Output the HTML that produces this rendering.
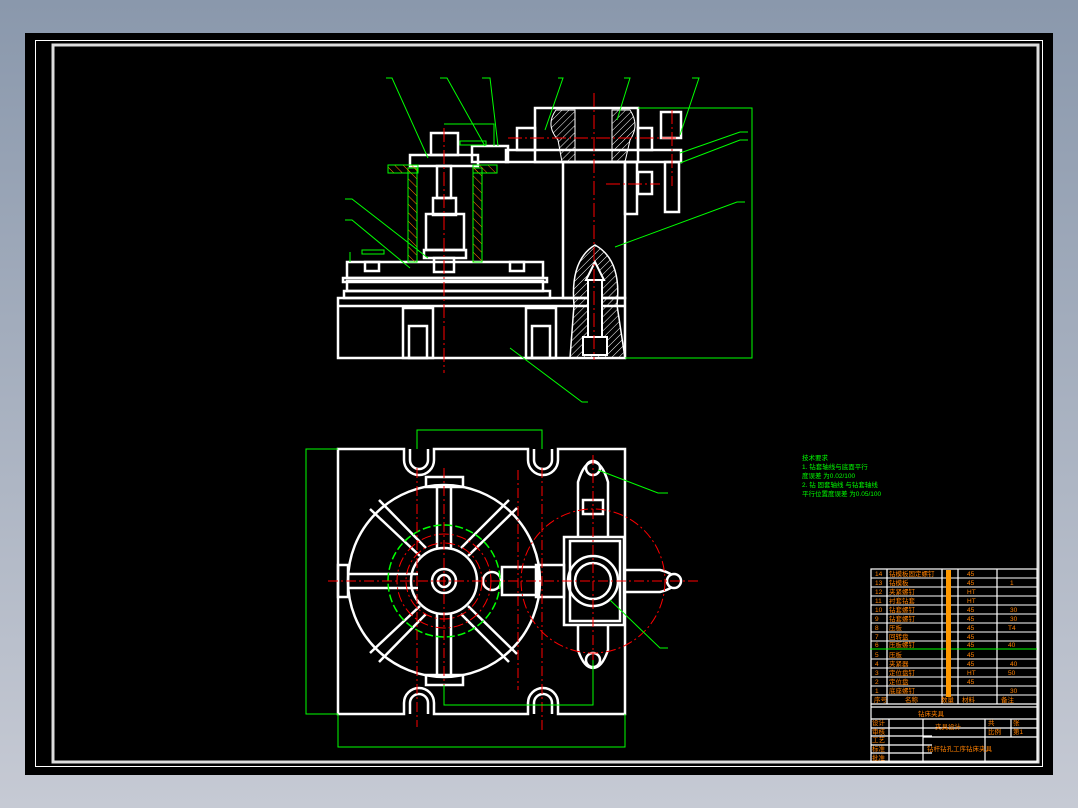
<!DOCTYPE html>
<html><head><meta charset="utf-8"><style>
html,body{margin:0;padding:0;width:1078px;height:808px;overflow:hidden;background:linear-gradient(#8a98ac,#c6cad4);}
svg{position:absolute;left:0;top:0}
text{font-family:"Liberation Sans","Noto Sans CJK SC",sans-serif}
</style></head><body>
<svg width="1078" height="808" viewBox="0 0 1078 808" xmlns="http://www.w3.org/2000/svg">
<defs>
<pattern id="hw" patternUnits="userSpaceOnUse" width="5" height="5" patternTransform="rotate(45)"><line x1="0" y1="0" x2="0" y2="5" stroke="#fff" stroke-width="1"/></pattern>
<pattern id="ho" patternUnits="userSpaceOnUse" width="6" height="6" patternTransform="rotate(-45)"><line x1="0" y1="0" x2="0" y2="6" stroke="#ff8000" stroke-width="1"/></pattern>
</defs>
<rect x="25" y="33" width="1028" height="742" fill="#000"/>
<rect x="35.5" y="40.5" width="1007" height="726" fill="none" stroke="#fff" stroke-width="1"/>
<rect x="53" y="45" width="985" height="717" fill="none" stroke="#ddd" stroke-width="3"/>

<!-- ===== TOP (front) VIEW ===== -->
<g fill="none" stroke="#fff" stroke-width="2.5">
<rect x="338" y="298" width="287" height="60"/>
<rect x="403" y="308" width="30" height="50"/><rect x="409" y="326" width="18" height="32"/>
<rect x="526" y="308" width="30" height="50"/><rect x="532" y="326" width="18" height="32"/>
<line x1="338" y1="306" x2="625" y2="306"/>
<rect x="344" y="291" width="206" height="7"/>
<rect x="347" y="281" width="196" height="10"/>
<rect x="343" y="278" width="204" height="4"/>
<rect x="347" y="262" width="196" height="16"/>
<rect x="365" y="262" width="14" height="9"/><rect x="510" y="262" width="14" height="9"/>
<rect x="434" y="258" width="20" height="14"/>
<rect x="431" y="133" width="27" height="22"/>
<rect x="410" y="155" width="68" height="11"/>
<rect x="437" y="166" width="14" height="32"/>
<rect x="433" y="198" width="23" height="17"/>
<rect x="426" y="214" width="38" height="36"/>
<rect x="424" y="250" width="42" height="8"/>
<rect x="563" y="162" width="62" height="136"/>
<rect x="625" y="162" width="12" height="52"/>
<rect x="535" y="108" width="103" height="54"/>
<rect x="506" y="150" width="175" height="12"/>
<rect x="517" y="128" width="18" height="22"/>
<rect x="638" y="128" width="14" height="22"/>
<rect x="661" y="112" width="20" height="26"/>
<rect x="665" y="162" width="14" height="50"/>
<rect x="638" y="172" width="14" height="22"/>
<rect x="472" y="146" width="36" height="16"/>
</g>
<rect x="408" y="168" width="9" height="94" fill="url(#ho)" stroke="#0f0" stroke-width="1"/>
<rect x="473" y="168" width="9" height="94" fill="url(#ho)" stroke="#0f0" stroke-width="1"/>
<rect x="388" y="165" width="30" height="8" fill="url(#ho)" stroke="#0f0" stroke-width="1"/>
<rect x="473" y="165" width="24" height="8" fill="url(#ho)" stroke="#0f0" stroke-width="1"/>
<path d="M574 305 Q570 260 595 245 Q622 260 617 305 L625 358 L570 358 Z" fill="url(#hw)" stroke="#fff" stroke-width="1.5"/>
<rect x="588" y="280" width="14" height="60" fill="#000" stroke="#fff" stroke-width="2"/>
<path d="M586 280 L595 262 L604 280 Z" fill="#000" stroke="#fff" stroke-width="2"/>
<rect x="583" y="337" width="24" height="18" fill="#000" stroke="#fff" stroke-width="2"/>
<path d="M556 110 Q545 125 558 140 L562 162 L575 162 L575 110 Z" fill="url(#hw)" stroke="#fff" stroke-width="1"/>
<path d="M630 110 Q640 125 630 140 L625 162 L612 162 L612 110 Z" fill="url(#hw)" stroke="#fff" stroke-width="1"/>
<g stroke="#f00" stroke-width="1" stroke-dasharray="14,3,2,3">
<line x1="444" y1="128" x2="444" y2="373"/>
<line x1="594" y1="93" x2="594" y2="360"/>
<line x1="508" y1="138" x2="676" y2="138"/>
<line x1="606" y1="184" x2="660" y2="184"/>
<line x1="672" y1="110" x2="672" y2="186"/>
</g>
<g stroke="#0f0" stroke-width="1" fill="none">
<path d="M386 78 L392 78 L428 158"/><path d="M440 78 L447 78 L485 146"/>
<path d="M482 78 L490 78 L498 146"/><path d="M558 78 L563 78 L545 130"/>
<path d="M624 78 L630 78 L617 120"/><path d="M692 78 L699 78 L680 135"/>
<path d="M748 132 L740 132 L680 153"/><path d="M748 140 L740 140 L680 163"/>
<path d="M745 202 L737 202 L615 247"/><path d="M345 199 L352 199 L428 258"/>
<path d="M345 220 L352 220 L410 268"/><path d="M588 402 L582 402 L510 348"/>
<path d="M350 252 L350 262"/><rect x="362" y="250" width="22" height="4"/>
<rect x="460" y="141" width="26" height="4"/>
<path d="M444 124 L494 124 L494 146"/>
<path d="M638 108 L752 108 L752 358 L625 358"/>
</g>

<!-- ===== BOTTOM (plan) VIEW ===== -->
<g fill="none" stroke="#fff" stroke-width="2.5">
<path d="M338 449 L404 449 L404 460 A15 15 0 0 0 434 460 L434 449 L528 449 L528 460 A15 15 0 0 0 558 460 L558 449 L625 449 L625 714 L558 714 L558 703 A15 15 0 0 0 528 703 L528 714 L434 714 L434 703 A15 15 0 0 0 404 703 L404 714 L338 714 Z"/>
<path d="M410 449 L410 460 A9 9 0 0 0 428 460 L428 449 M534 449 L534 460 A9 9 0 0 0 552 460 L552 449 M410 714 L410 703 A9 9 0 0 1 428 703 L428 714 M534 714 L534 703 A9 9 0 0 1 552 703 L552 714"/>
<circle cx="444" cy="581" r="96"/>
<circle cx="444" cy="581" r="33"/>
<circle cx="444" cy="581" r="12"/><circle cx="444" cy="581" r="6"/>
<rect x="426" y="477" width="37" height="10"/><rect x="426" y="675" width="37" height="10"/>
<rect x="338" y="565" width="10" height="32"/>
<path d="M437 487 L437 548 M451 487 L451 548 M437 614 L437 677 M451 614 L451 677"/>
<path d="M348 574 L418 574 M348 588 L418 588"/>
<path d="M370 509 L420 556 M379 500 L426 548 M468 556 L517 508 M461 548 L509 500 M370 653 L420 606 M379 662 L426 614 M468 606 L517 654 M461 614 L509 662"/>
<rect x="502" y="567" width="36" height="28"/>
<rect x="536" y="565" width="28" height="32"/>
<rect x="564" y="537" width="60" height="88"/>
<rect x="570" y="541" width="50" height="80"/>
<circle cx="593" cy="581" r="25"/><circle cx="593" cy="581" r="18"/>
<path d="M578 537 L578 482 Q584 462 593 462 Q602 462 608 482 L608 537"/>
<path d="M578 625 L578 650 Q584 668 593 668 Q602 668 608 650 L608 625"/>
<rect x="583" y="500" width="20" height="14"/>
<path d="M624 570 L660 570 Q668 572 672 575 M624 592 L660 592 Q668 590 672 587"/>
<circle cx="674" cy="581" r="7"/>
<circle cx="593" cy="468" r="7"/><circle cx="593" cy="660" r="7"/>
<circle cx="492" cy="581" r="9"/>
</g>
<g fill="none" stroke="#0f0" stroke-width="1.5" stroke-dasharray="8,3">
<circle cx="444" cy="581" r="56"/>
</g>
<g fill="none" stroke="#f00" stroke-width="1" stroke-dasharray="10,3,2,3">
<circle cx="444" cy="581" r="47"/><circle cx="444" cy="581" r="38"/>
<circle cx="593" cy="581" r="72"/>
<line x1="328" y1="581" x2="700" y2="581"/>
<line x1="444" y1="468" x2="444" y2="700"/>
<line x1="417" y1="468" x2="417" y2="727"/><line x1="542" y1="468" x2="542" y2="730"/>
<line x1="518" y1="470" x2="518" y2="690"/>
<line x1="593" y1="455" x2="593" y2="680"/>
</g>
<g stroke="#0f0" stroke-width="1" fill="none">
<path d="M417 449 L417 430 L542 430 L542 449"/>
<path d="M338 449 L306 449 L306 714 L338 714"/>
<path d="M338 714 L338 747 L625 747 L625 714"/>
<path d="M444 685 L444 705 L593 705 L593 660"/>
<path d="M598 470 L658 493 L668 493"/><path d="M610 600 L660 648 L668 648"/>
</g>

<g fill="#0f0" font-size="6.5">
<text x="802" y="460">技术要求</text>
<text x="802" y="469">1. 钻套轴线与底面平行</text>
<text x="802" y="478">度误差 为0.02/100</text>
<text x="802" y="487">2. 钻 固套轴线 与钻套轴线</text>
<text x="802" y="496">平行位置度误差 为0.05/100</text>
</g>

<g stroke="#fff" stroke-width="1.2" fill="none">
<rect x="871" y="569" width="166" height="193"/>
<line x1="887" y1="569" x2="887" y2="704"/><line x1="942" y1="569" x2="942" y2="704"/>
<line x1="958" y1="569" x2="958" y2="704"/><line x1="997" y1="569" x2="997" y2="704"/>
<line x1="871" y1="704" x2="1037" y2="704"/><line x1="871" y1="707" x2="1037" y2="707"/>
<line x1="871" y1="719" x2="1037" y2="719"/>
<line x1="871" y1="728" x2="1037" y2="728"/>
<line x1="871" y1="736" x2="932" y2="736"/><line x1="871" y1="745" x2="932" y2="745"/><line x1="871" y1="753" x2="932" y2="753"/>
<line x1="889" y1="719" x2="889" y2="762"/><line x1="923" y1="719" x2="923" y2="762"/>
<line x1="985" y1="719" x2="985" y2="762"/><line x1="1011" y1="719" x2="1011" y2="737"/>
<line x1="923" y1="737" x2="1037" y2="737"/>
</g>
<g stroke="#fff" stroke-width="1">
<line x1="871" y1="578" x2="1037" y2="578"/><line x1="871" y1="587" x2="1037" y2="587"/>
<line x1="871" y1="596" x2="1037" y2="596"/><line x1="871" y1="605" x2="1037" y2="605"/>
<line x1="871" y1="614" x2="1037" y2="614"/><line x1="871" y1="623" x2="1037" y2="623"/>
<line x1="871" y1="632" x2="1037" y2="632"/><line x1="871" y1="641" x2="1037" y2="641"/>
<line x1="871" y1="659" x2="1037" y2="659"/><line x1="871" y1="668" x2="1037" y2="668"/>
<line x1="871" y1="677" x2="1037" y2="677"/><line x1="871" y1="686" x2="1037" y2="686"/>
<line x1="871" y1="695" x2="1037" y2="695"/>
</g>
<line x1="870" y1="649" x2="1037" y2="649" stroke="#0f0" stroke-width="1"/>
<g fill="#ff8000" font-size="6.5">
<text x="875" y="576">14</text><text x="889" y="576">钻模板固定螺钉</text><text x="967" y="576">45</text>
<text x="875" y="585">13</text><text x="889" y="585">钻模板</text><text x="967" y="585">45</text><text x="1010" y="585">1</text>
<text x="875" y="594">12</text><text x="889" y="594">夹紧螺钉</text><text x="967" y="594">HT</text>
<text x="875" y="603">11</text><text x="889" y="603">衬套钻套</text><text x="967" y="603">HT</text>
<text x="875" y="612">10</text><text x="889" y="612">钻套螺钉</text><text x="967" y="612">45</text><text x="1010" y="612">30</text>
<text x="875" y="621">9</text><text x="889" y="621">钻套螺钉</text><text x="967" y="621">45</text><text x="1010" y="621">30</text>
<text x="875" y="630">8</text><text x="889" y="630">压板</text><text x="967" y="630">45</text><text x="1008" y="630">T4</text>
<text x="875" y="639">7</text><text x="889" y="639">回转盘</text><text x="967" y="639">45</text>
<text x="875" y="647">6</text><text x="889" y="647">压板螺钉</text><text x="967" y="647">45</text><text x="1008" y="647">40</text>
<text x="875" y="657">5</text><text x="889" y="657">压板</text><text x="967" y="657">45</text>
<text x="875" y="666">4</text><text x="889" y="666">夹紧器</text><text x="967" y="666">45</text><text x="1010" y="666">40</text>
<text x="875" y="675">3</text><text x="889" y="675">定位盘钉</text><text x="967" y="675">HT</text><text x="1008" y="675">50</text>
<text x="875" y="684">2</text><text x="889" y="684">定位盘</text><text x="967" y="684">45</text>
<text x="875" y="693">1</text><text x="889" y="693">底座螺钉</text><text x="1010" y="693">30</text>
<text x="874" y="702">序号</text><text x="905" y="702">名称</text><text x="941" y="702">数量</text><text x="962" y="702">材料</text><text x="1001" y="702">备注</text>
<text x="918" y="716">钻床夹具</text>
<text x="872" y="725">设计</text><text x="935" y="729">夹具设计</text><text x="988" y="725">共</text><text x="1013" y="725">张</text>
<text x="872" y="734">审核</text><text x="988" y="734">比例</text><text x="1013" y="734">第1</text>
<text x="872" y="742">工艺</text><text x="872" y="751">标准</text><text x="872" y="760">批准</text>
<text x="927" y="751">钻杆钻孔工序钻床夹具</text>
</g>
<rect x="946" y="570" width="5" height="127" fill="#f90"/>
</svg>
</body></html>
